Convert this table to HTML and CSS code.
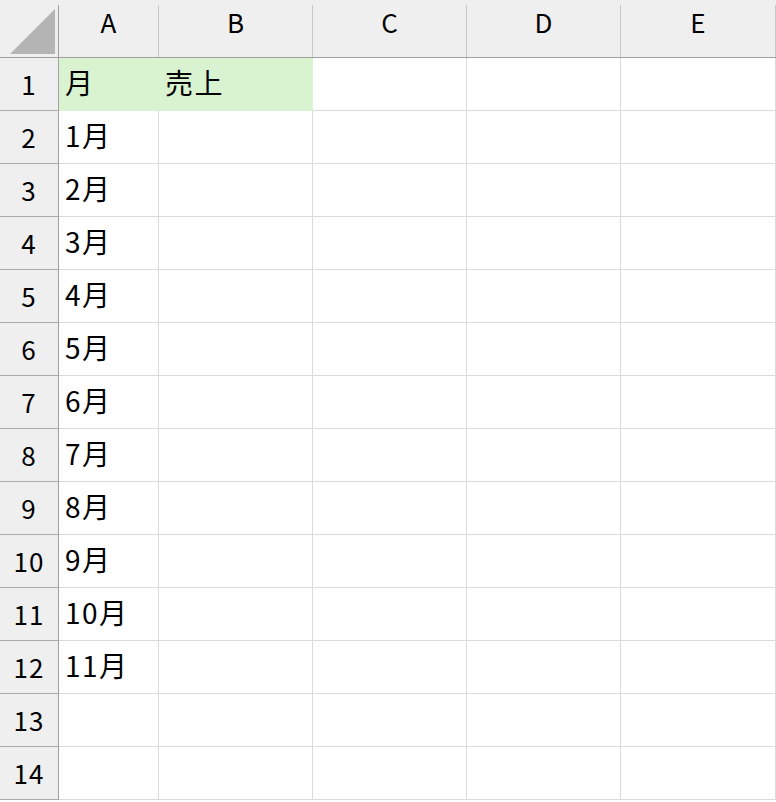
FILE: index.html
```html
<!DOCTYPE html>
<html lang="ja">
<head>
<meta charset="utf-8">
<link rel="stylesheet" href="styles.css">
</head>
<body>
<div class="sheet">
  <div class="corner"><svg width="58" height="58" viewBox="0 0 58 58"><polygon points="10,54 55,9 55,54" fill="#b4b4b4"/></svg></div>
  <div class="colhead">A</div>
  <div class="colhead">B</div>
  <div class="colhead">C</div>
  <div class="colhead">D</div>
  <div class="colhead">E</div>

  <div class="rowhead">1</div><div class="cell fill">月</div><div class="cell fill">売上</div><div class="cell"></div><div class="cell"></div><div class="cell"></div>
  <div class="rowhead">2</div><div class="cell">1月</div><div class="cell"></div><div class="cell"></div><div class="cell"></div><div class="cell"></div>
  <div class="rowhead">3</div><div class="cell">2月</div><div class="cell"></div><div class="cell"></div><div class="cell"></div><div class="cell"></div>
  <div class="rowhead">4</div><div class="cell">3月</div><div class="cell"></div><div class="cell"></div><div class="cell"></div><div class="cell"></div>
  <div class="rowhead">5</div><div class="cell">4月</div><div class="cell"></div><div class="cell"></div><div class="cell"></div><div class="cell"></div>
  <div class="rowhead">6</div><div class="cell">5月</div><div class="cell"></div><div class="cell"></div><div class="cell"></div><div class="cell"></div>
  <div class="rowhead">7</div><div class="cell">6月</div><div class="cell"></div><div class="cell"></div><div class="cell"></div><div class="cell"></div>
  <div class="rowhead">8</div><div class="cell">7月</div><div class="cell"></div><div class="cell"></div><div class="cell"></div><div class="cell"></div>
  <div class="rowhead">9</div><div class="cell">8月</div><div class="cell"></div><div class="cell"></div><div class="cell"></div><div class="cell"></div>
  <div class="rowhead">10</div><div class="cell">9月</div><div class="cell"></div><div class="cell"></div><div class="cell"></div><div class="cell"></div>
  <div class="rowhead">11</div><div class="cell">10月</div><div class="cell"></div><div class="cell"></div><div class="cell"></div><div class="cell"></div>
  <div class="rowhead">12</div><div class="cell">11月</div><div class="cell"></div><div class="cell"></div><div class="cell"></div><div class="cell"></div>
  <div class="rowhead">13</div><div class="cell"></div><div class="cell"></div><div class="cell"></div><div class="cell"></div><div class="cell"></div>
  <div class="rowhead">14</div><div class="cell"></div><div class="cell"></div><div class="cell"></div><div class="cell"></div><div class="cell"></div>
</div>
</body>
</html>
```

FILE: styles.css
```css
* { box-sizing: border-box; }
html, body { margin: 0; padding: 0; background: #fff; }
body {
  width: 776px;
  height: 802px;
  overflow: hidden;
  font-family: "Noto Sans CJK JP", "Noto Sans", sans-serif;
  color: #000;
}
.sheet {
  display: grid;
  grid-template-columns: 59px 100px 154px 154px 154px 155px;
  grid-template-rows: 58px repeat(14, 53px);
}
.corner {
  background:
    linear-gradient(#a0a0a0, #a0a0a0) right 5px / 1px calc(100% - 5px) no-repeat,
    #efefef;
  border-bottom: 1px solid #9e9e9e;
}
.corner svg { display: block; }
.colhead {
  background:
    linear-gradient(#c8c8c8, #c8c8c8) right 5px / 1px calc(100% - 5px) no-repeat,
    #efefef;
  border-bottom: 1px solid #9e9e9e;
  display: flex;
  align-items: center;
  justify-content: center;
  font-size: 26px;
  line-height: 1;
  padding-bottom: 13px;
  padding-right: 1px;
}
.rowhead {
  background: #efefef;
  border-right: 1px solid #a0a0a0;
  border-bottom: 1px solid #ababab;
  display: flex;
  align-items: center;
  justify-content: center;
  font-size: 26px;
  line-height: 1;
  padding-top: 0;
  letter-spacing: 1px;
}
.cell {
  border-right: 1px solid #dadada;
  border-bottom: 1px solid #dadada;
  font-size: 28px;
  line-height: 1;
  padding: 0 0 14px 6px;
  display: flex;
  align-items: flex-end;
  white-space: nowrap;
  letter-spacing: 1.5px;
}
.cell.fill {
  background: #d9f2d0;
  border-right-color: #d9f2d0;
  border-bottom-color: #d9f2d0;
}
```
